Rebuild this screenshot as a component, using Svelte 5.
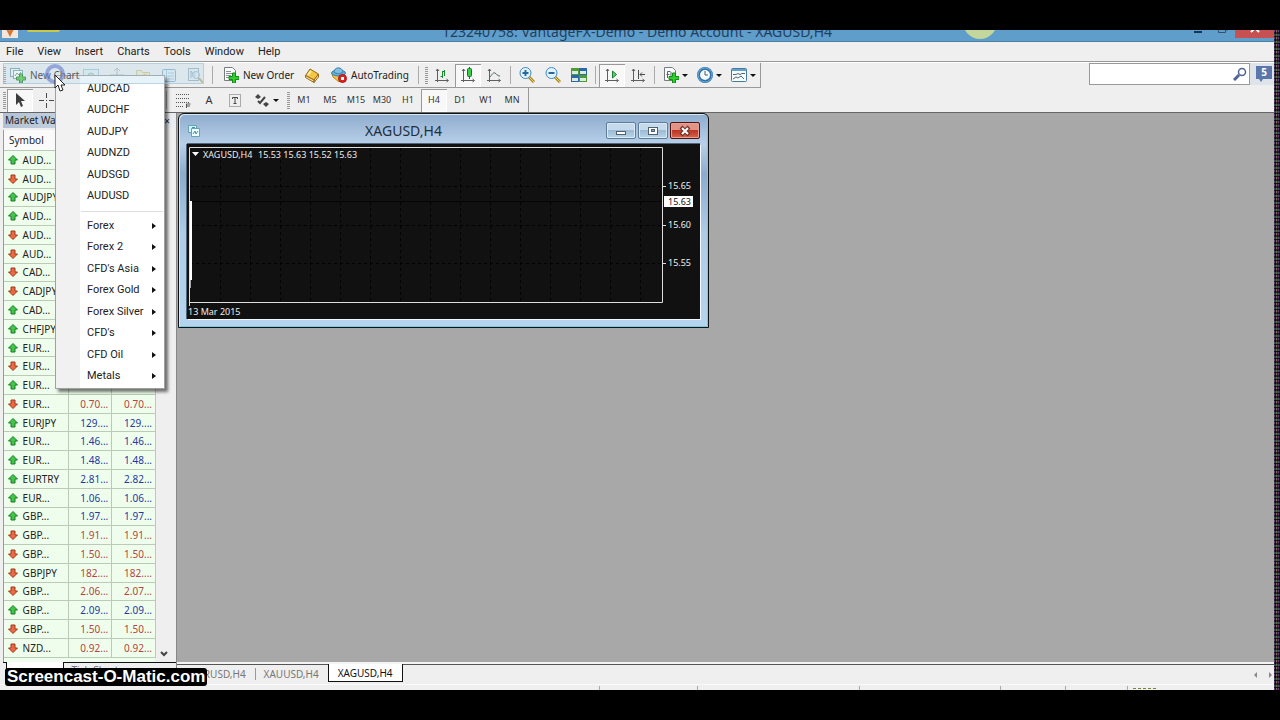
<script lang="ts">
  const menuBar = ['File', 'View', 'Insert', 'Charts', 'Tools', 'Window', 'Help'];
  const timeframes = ['M1', 'M5', 'M15', 'M30', 'H1', 'H4', 'D1', 'W1', 'MN'];
  const pairs = ['AUDCAD', 'AUDCHF', 'AUDJPY', 'AUDNZD', 'AUDSGD', 'AUDUSD'];
  const groups = ['Forex', 'Forex 2', "CFD's Asia", 'Forex Gold', 'Forex Silver', "CFD's", 'CFD Oil', 'Metals'];

  const quotes = [
    { symbol: 'AUD...', up: true, bid: '0.97...', ask: '0.97...' },
    { symbol: 'AUD...', up: false, bid: '0.76...', ask: '0.76...' },
    { symbol: 'AUDJPY', up: true, bid: '92.7...', ask: '92.7...' },
    { symbol: 'AUD...', up: true, bid: '1.04...', ask: '1.04...' },
    { symbol: 'AUD...', up: false, bid: '1.06...', ask: '1.06...' },
    { symbol: 'AUD...', up: false, bid: '0.76...', ask: '0.76...' },
    { symbol: 'CAD...', up: false, bid: '0.78...', ask: '0.78...' },
    { symbol: 'CADJPY', up: false, bid: '95.0...', ask: '95.0...' },
    { symbol: 'CAD...', up: true, bid: '1.08...', ask: '1.08...' },
    { symbol: 'CHFJPY', up: true, bid: '120....', ask: '120....' },
    { symbol: 'EUR...', up: true, bid: '1.37...', ask: '1.37...' },
    { symbol: 'EUR...', up: false, bid: '1.34...', ask: '1.34...' },
    { symbol: 'EUR...', up: true, bid: '1.05...', ask: '1.05...' },
    { symbol: 'EUR...', up: false, bid: '0.70...', ask: '0.70...' },
    { symbol: 'EURJPY', up: true, bid: '129....', ask: '129....' },
    { symbol: 'EUR...', up: true, bid: '1.46...', ask: '1.46...' },
    { symbol: 'EUR...', up: true, bid: '1.48...', ask: '1.48...' },
    { symbol: 'EURTRY', up: true, bid: '2.81...', ask: '2.82...' },
    { symbol: 'EUR...', up: true, bid: '1.06...', ask: '1.06...' },
    { symbol: 'GBP...', up: true, bid: '1.97...', ask: '1.97...' },
    { symbol: 'GBP...', up: false, bid: '1.91...', ask: '1.91...' },
    { symbol: 'GBP...', up: false, bid: '1.50...', ask: '1.50...' },
    { symbol: 'GBPJPY', up: false, bid: '182....', ask: '182....' },
    { symbol: 'GBP...', up: false, bid: '2.06...', ask: '2.07...' },
    { symbol: 'GBP...', up: true, bid: '2.09...', ask: '2.09...' },
    { symbol: 'GBP...', up: false, bid: '1.50...', ask: '1.50...' },
    { symbol: 'NZD...', up: false, bid: '0.92...', ask: '0.92...' },
  ];

  const chartTabs = ['EURUSD,H4', 'XAUUSD,H4', 'XAGUSD,H4'];
  const gridX = Array.from({ length: 15 }, (_, i) => 33 + i * 30);
  const priceLevels = [
    { y: 42, label: '15.65' },
    { y: 81, label: '15.60' },
    { y: 119, label: '15.55' },
  ];

  let timeframe = $state('H4');
  let activeTab = $state('XAGUSD,H4');
  let search = $state('');
</script>

{#snippet icon(name: string)}
  <svg class="icon" width="16" height="16" viewBox="0 0 16 16" fill="none" aria-hidden="true">
    {#if name === 'newchart'}
      <rect x="0.5" y="1.5" width="9" height="8" fill="#e4f0f6" stroke="#6a9aac" />
      <rect x="3.5" y="3.5" width="9" height="8" fill="#f2fafa" stroke="#6a9aac" />
      <path d="M5 9l2-3 2 2 2-3" stroke="#4a9a5a" />
      <path d="M9.500 7h3v3h3v3h-3v3h-3v-3h-3v-3h3z" fill="#45c440" stroke="#1f7a2a" />
    {:else if name === 'profiles'}
      <rect x="0.500" y="2.500" width="15" height="11" fill="#dff0f4" stroke="#7fb4c4" />
      <circle cx="8" cy="9" r="3" fill="#a8dcae" stroke="#68a87c" />
    {:else if name === 'watch'}
      <path d="M8 1v14M1 8h14M5 4l3-3 3 3M5 12l3 3 3-3" stroke="#8a9aa4" />
    {:else if name === 'folder'}
      <path d="M1.500 13.500v-10h5l1 2h7v8z" fill="#f3e7b6" stroke="#c4ac5a" />
      <path d="M8 8l2-2 2 2-2 3z" fill="#e4b84a" />
    {:else if name === 'terminal'}
      <rect x="1.500" y="2.500" width="13" height="12" rx="1" fill="#e0eef8" stroke="#4a86b4" />
      <path d="M5.500 3v11M7 6h6M7 9h6M7 12h6" stroke="#86aecb" />
    {:else if name === 'tester'}
      <rect x="1.500" y="1.500" width="10" height="12" fill="#e6eff4" stroke="#6f889a" />
      <path d="M4 11V4l4 6V4" stroke="#6a8094" />
      <circle cx="9" cy="8" r="3.500" stroke="#7a9ab0" fill="#dfeff680" />
      <path d="M12 11l4 5" stroke="#a28c1c" stroke-width="2" />
    {:else if name === 'order' || name === 'indicator'}
      <path d="M1.500 0.500h8l3 3v10h-11z" fill="#fbfbfb" stroke="#747c80" />
      {#if name === 'order'}
        <path d="M3 4.500h5M3 6.500h7M3 8.500h5M3 10.500h4" stroke="#879196" />
      {:else}
        <path d="M4.500 11V4.500h3M3.500 7.500h3M8 5v4" stroke="#58656a" />
      {/if}
      <path d="M9.500 6h3v3.500H16v3h-3.500V16h-3v-3.500H6v-3h3.500z" fill="#30cf2c" stroke="#148a1b" />
    {:else if name === 'book'}
      <path d="M1.500 8.500l4.500-6.500 8.500 5-4.500 6z" fill="#f2c744" stroke="#98691a" />
      <path d="M1.500 8.500v2l8.500 5v-2.500zM10 13v2.500l4.500-5.500V7z" fill="#fbe298" stroke="#98691a" />
      <path d="M4 8l3-4" stroke="#fff0b0" stroke-width="2" />
    {:else if name === 'auto'}
      <path d="M1 7l13-1-1 4-5 5-6-5z" fill="#f3c63e" stroke="#b7871e" />
      <ellipse cx="7.500" cy="6" rx="7" ry="3" fill="#68acd6" stroke="#3c81ad" />
      <path d="M3 5c0-5 8-6 9 0-2 2-7 2-9 0z" fill="#80bfe3" stroke="#3c81ad" />
      <circle cx="11.500" cy="11.500" r="4" fill="#db2323" stroke="#a51818" />
      <rect x="10" y="10" width="3" height="3" fill="#fff" />
    {:else if name === 'bars' || name === 'candles' || name === 'line' || name === 'scroll' || name === 'shift'}
      <path d="M3.500 2v13M1 13.500h13M2 4l1.500-2L5 4M12.500 12l2 1.500-2 1.500" stroke="#5b5f62" />
      {#if name === 'bars'}
        <path d="M8.500 4v7M6.500 9.500h2M8.500 4.500h2M10.500 3v6" stroke="#188b2d" />
      {:else if name === 'candles'}
        <path d="M9.500 0v12" stroke="#0a7b24" />
        <rect x="7.500" y="1.500" width="4" height="8" rx="1" fill="#3ccc48" stroke="#0a7b24" />
      {:else if name === 'line'}
        <path d="M4 10c2-2 3-5 5-4s2 3 5 3" stroke="#4e6757" />
      {:else if name === 'scroll'}
        <path d="M8.500 4v7l4-3.500z" fill="#62cf72" stroke="#168332" />
      {:else}
        <path d="M8.500 3v9M10 7.500h5M12 5.500l-2 2 2 2" stroke="#484d50" />
      {/if}
    {:else if name === 'zoomin' || name === 'zoomout'}
      <path d="M10 10l5 5" stroke="#a98824" stroke-width="3" />
      <path d="M10 10l5 5" stroke="#f1d358" />
      <circle cx="6.500" cy="6" r="5.500" fill="#e2f3fb" stroke="#3e8ac0" />
      <path d="M3.500 6h6" stroke="#276b9e" stroke-width="2" />
      {#if name === 'zoomin'}<path d="M6.500 3v6" stroke="#276b9e" stroke-width="2" />{/if}
    {:else if name === 'tiles'}
      <path d="M0 1h8v7H0zM8 8h8v7H8z" fill="#4f9b34" />
      <path d="M8 1h8v7H8zM0 8h8v7H0z" fill="#2e66ab" />
      <path d="M1 4h6v3H1zM9 4h6v3H9zM1 11h6v3H1zM9 11h6v3H9z" fill="#d9ecdf" />
    {:else if name === 'clock'}
      <circle cx="8" cy="8" r="6.500" fill="#f5fafc" stroke="#2f72ac" stroke-width="3" />
      <circle cx="8" cy="8" r="7" stroke="#72acd4" />
      <path d="M8 4v4h3" stroke="#4d5a62" />
    {:else if name === 'template'}
      <rect x="0.500" y="1.500" width="15" height="13" rx="1" fill="#f6fafb" stroke="#467a9b" />
      <path d="M1 3h14" stroke="#62a1c9" stroke-width="2" />
      <path d="M2 7.500h3l2-1 2 1 2-1h3M2 12l3-2 2 1 3-2 3 3" stroke="#4c6974" />
    {:else if name === 'cursor'}
      <path d="M4 1v12l3-3 2 5 2-1-2-5h4z" fill="#3c3c3c" />
    {:else if name === 'cross'}
      <path d="M8.500 1v5M8.500 11v5M1 8.500h5M11 8.500h5M8 8.500h1" stroke="#484848" />
    {:else if name === 'fib'}
      <path d="M1 2.500h13M1 6.500h13M1 10.500h13M1 14.500h8" stroke="#555" stroke-dasharray="1 1" />
      <path d="M11.500 16v-4h4M12 14h3" stroke="#555" />
    {:else if name === 'label'}
      <rect x="2.500" y="2.500" width="11" height="12" stroke="#666" stroke-dasharray="1 1" />
      <path d="M5.500 7V5.500h5V7M8 5v7M6.500 11.500h3" stroke="#444" />
    {:else if name === 'shapes'}
      <path d="M1 5l3-3 3 3-3 2zM9 12l3-2 3 2-3 3z" fill="#444" />
      <path d="M4 9l2 2 5-6" stroke="#444" stroke-width="2" />
    {:else if name === 'slope'}
      <path d="M2 14L14 2" stroke="#555" />
    {/if}
  </svg>
{/snippet}

{#snippet tool(name: string, title: string, pressed = false)}
  <button type="button" class="tool" class:pressed aria-label={title}>{@render icon(name)}</button>
{/snippet}

<div class="screen">
  <div class="app">
    <header class="titlebar">
      <svg class="logo" width="16" height="16" viewBox="0 0 16 16" aria-hidden="true">
        <rect width="16" height="16" fill="#f4e6dc" />
        <path d="M2 3l6 12 6-12-4 2-2 4-2-4z" fill="#d8752f" />
      </svg>
      <span class="smear"></span>
      <h1>123240758: VantageFX-Demo - Demo Account - XAGUSD,H4</h1>
      <span class="orb"></span>
      <div class="window-controls">
        <button type="button" aria-label="Minimize">
          <svg width="10" height="10" viewBox="0 0 10 10"><path d="M1 7h8v2H1z" fill="#173653" /></svg>
        </button>
        <button type="button" aria-label="Restore">
          <svg width="12" height="12" viewBox="0 0 12 12" fill="none" stroke="#31536e"><path d="M1.500 3.500h7v7h-7zM4 1.500h6.500V8H9" /></svg>
        </button>
        <button type="button" class="close" aria-label="Close">
          <svg width="12" height="12" viewBox="0 0 12 12" stroke="#fff" stroke-width="2"><path d="M2 2l8 8M10 2l-8 8" /></svg>
        </button>
      </div>
    </header>

    <nav class="menubar">
      {#each menuBar as item}
        <button type="button">{item}</button>
      {/each}
    </nav>

    <div class="toolbars">
      <div class="toolbar-rows">
        <div class="toolbar standard">
          <span class="grip"></span>
          <button type="button" class="tool wide ghost">{@render icon('newchart')}<span>New Chart</span></button>
          <div class="faded">
            {@render tool('profiles', 'Profiles')}
            {@render tool('watch', 'Market Watch')}
            {@render tool('folder', 'Navigator')}
            {@render tool('terminal', 'Terminal')}
            {@render tool('tester', 'Strategy Tester')}
          </div>
          <span class="divider"></span>
          <button type="button" class="tool wide order">{@render icon('order')}<span>New Order</span></button>
          {@render tool('book', 'MetaEditor')}
          <button type="button" class="tool wide auto">{@render icon('auto')}<span>AutoTrading</span></button>
          <span class="divider narrow"></span>
          <span class="grip"></span>
          {@render tool('bars', 'Bar Chart')}
          {@render tool('candles', 'Candlesticks', true)}
          {@render tool('line', 'Line Chart')}
          <span class="divider narrow"></span>
          {@render tool('zoomin', 'Zoom In')}
          {@render tool('zoomout', 'Zoom Out')}
          {@render tool('tiles', 'Tile Windows')}
          <span class="divider narrow"></span>
          {@render tool('scroll', 'Auto Scroll', true)}
          {@render tool('shift', 'Chart Shift')}
          <span class="divider narrow"></span>
          {#each ['indicator', 'clock', 'template'] as name}
            <button type="button" class="tool drop" aria-label={name}>{@render icon(name)}<i class="caret"></i></button>
          {/each}
        </div>

        <div class="toolbar drawing">
          <span class="grip"></span>
          {@render tool('cursor', 'Cursor', true)}
          {@render tool('cross', 'Crosshair')}
          {#each ['Vertical Line', 'Horizontal Line', 'Trendline', 'Channel'] as title}
            {@render tool('slope', title)}
          {/each}
          <span class="divider narrow"></span>
          {@render tool('fib', 'Fibonacci')}
          <button type="button" class="tool letter">A</button>
          {@render tool('label', 'Text Label')}
          <button type="button" class="tool drop" aria-label="Arrows">{@render icon('shapes')}<i class="caret"></i></button>
          <span class="grip"></span>
          {#each timeframes as tf}
            <button type="button" class="tool tf" class:pressed={timeframe === tf} onclick={() => (timeframe = tf)}>{tf}</button>
          {/each}
        </div>
      </div>

      <div class="search">
        <input type="text" aria-label="Search" bind:value={search} />
        <svg width="14" height="14" viewBox="0 0 14 14" fill="none" aria-hidden="true">
          <circle cx="9" cy="5" r="3.500" stroke="#4c6596" stroke-width="1.500" />
          <path d="M6 8l-5 5" stroke="#4c6596" stroke-width="3" />
        </svg>
      </div>
      <button type="button" class="chat" aria-label="Messages"><span>5</span></button>
    </div>

    <div class="body">
      <aside class="market">
        <div class="market-title">
          <h2>Market Watch</h2>
          <button type="button" aria-label="Close panel">×</button>
        </div>
        <div class="market-list">
          <table>
            <thead>
              <tr><th>Symbol</th><th>Bid</th><th>Ask</th></tr>
            </thead>
            <tbody>
              {#each quotes as q}
                <tr class:up={q.up}>
                  <td>
                    <svg width="10" height="10" viewBox="0 0 10 10" aria-hidden="true">
                      {#if q.up}
                        <path d="M5 0.500l4.500 4.500h-2.500v4h-4v-4h-2.500z" fill="#43c549" stroke="#187b26" />
                      {:else}
                        <path d="M5 9.500l4.500-4.500h-2.500v-4h-4v4h-2.500z" fill="#ee6843" stroke="#9a3a1d" />
                      {/if}
                    </svg>
                    {q.symbol}
                  </td>
                  <td class="price">{q.bid}</td>
                  <td class="price">{q.ask}</td>
                </tr>
              {/each}
            </tbody>
          </table>
          <div class="scrollbar">
            <svg width="8" height="6" viewBox="0 0 8 6" fill="none" stroke="#444" stroke-width="2" aria-hidden="true"><path d="M1 1l3 3 3-3" /></svg>
          </div>
        </div>
        <div class="market-tabs">
          <button type="button" class="active">Symbols</button>
          <button type="button">Tick Chart</button>
        </div>
      </aside>

      <main class="desk">
        <div class="mdi">
          <section class="chart-window">
            <div class="chart-title">
              <svg width="14" height="14" viewBox="0 0 14 14" aria-hidden="true">
                <path d="M1.500 1.500h8v7h-8z" fill="#d5f1f1" stroke="#65a3b7" />
                <path d="M4.500 4.500h8v8h-8z" fill="#edffff" stroke="#65a3b7" />
                <path d="M5 3.500h3M6 10l2-3 1 3 2-3" fill="none" stroke="#4c91a6" />
              </svg>
              <h3>XAGUSD,H4</h3>
              <div class="chart-controls">
                <button type="button" aria-label="Minimize chart">
                  <svg width="14" height="12" viewBox="0 0 14 12"><rect x="2.500" y="6.500" width="9" height="3" fill="#fff" stroke="#53616d" /></svg>
                </button>
                <button type="button" aria-label="Maximize chart">
                  <svg width="14" height="12" viewBox="0 0 14 12"><rect x="2.500" y="2.500" width="9" height="7" fill="#fff" stroke="#53616d" /><rect x="5.500" y="4.500" width="3" height="2" fill="#8aa6bc" stroke="#53616d" /></svg>
                </button>
                <button type="button" class="close" aria-label="Close chart">
                  <svg width="14" height="12" viewBox="0 0 14 12"><path d="M3 2l8 8M11 2l-8 8" stroke="#6d332d" stroke-width="4" /><path d="M4 3l6 6M10 3l-6 6" stroke="#fff" stroke-width="2" /></svg>
                </button>
              </div>
            </div>
            <svg class="plot" viewBox="0 0 513 175" role="img" aria-label="XAGUSD, H4 price chart">
              <rect width="513" height="175" fill="#111" />
              <g stroke="#020202" stroke-dasharray="3 3">
                {#each gridX as x}
                  <path d="M{x}.5 4V158" />
                {/each}
                {#each priceLevels as level}
                  <path d="M3 {level.y}.5H475" />
                {/each}
              </g>
              <path d="M3 57.500H475" stroke="#060606" />
              <path d="M2.500 162V3.500H475.500V158.500H2" fill="none" stroke="#dedede" />
              <path d="M3 57h2v79H3z" fill="#fff" />
              <path d="M3.500 136v8" stroke="#aaa" />
              <path d="M5 8h7l-3.500 4z" fill="#fff" />
              <text x="16" y="14">XAGUSD,H4</text>
              <text x="71" y="14">15.53 15.63 15.52 15.63</text>
              {#each priceLevels as level}
                <path d="M476 {level.y}.5h3" stroke="#dedede" />
                <text x="481" y={level.y + 3}>{level.label}</text>
              {/each}
              <rect x="477" y="52" width="29" height="11" fill="#fff" />
              <text class="current" x="481" y="61">15.63</text>
              <text x="1" y="171">13 Mar 2015</text>
            </svg>
          </section>
        </div>
        <div class="chart-tabs">
          {#each chartTabs as tab}
            <button type="button" class:active={activeTab === tab} onclick={() => (activeTab = tab)}>{tab}</button>
          {/each}
          <div class="tab-arrows">
            <button type="button" class="prev" aria-label="Previous tabs"></button>
            <button type="button" class="next" aria-label="Next tabs"></button>
          </div>
        </div>
      </main>
    </div>

    <footer class="status">
      <span></span><span></span><span></span><span></span><span></span><span></span><i></i>
    </footer>

    <div class="popup" role="menu">
      {#each pairs as pair}
        <button type="button" role="menuitem">{pair}</button>
      {/each}
      <hr />
      {#each groups as group}
        <button type="button" role="menuitem" class="sub">{group}</button>
      {/each}
    </div>
    <div class="highlight"></div>
    <span class="click-ring"></span>
    <svg class="pointer" width="12" height="18" viewBox="0 0 12 18" aria-hidden="true">
      <path d="M1 1v13l3-3 2 6 3-1-2-5h4z" fill="#fff" stroke="#222" />
    </svg>
    <div class="watermark">Screencast-O-Matic.com</div>
  </div>
  <div class="noise"></div>
</div>

<style>
  :global(body) {
    background: #000;
  }

  .screen {
    display: flex;
    height: 100vh;
    box-sizing: border-box;
    padding: 30px 0;
    background: #000;
    color: #222;
    font: 10px/14px 'Noto Sans', 'Open Sans', sans-serif;
  }

  .app {
    position: relative;
    flex: 1;
    min-width: 0;
    display: flex;
    flex-direction: column;
    background: #efefef;
  }

  .noise {
    width: 6px;
    background:
      repeating-linear-gradient(0deg, #0000 0 2px, #000b 2px 3px, #2e694080 3px 5px, #0008 5px 7px),
      repeating-linear-gradient(90deg, #5d407a 0 1px, #15151b 1px 2px, #826a52 2px 3px, #222a45 3px 4px);
  }

  h1,
  h2,
  h3 {
    margin: 0;
    font-size: 10px;
    font-weight: 400;
  }

  button {
    padding: 0;
    border: 0;
    background: none;
    color: inherit;
    font: inherit;
    white-space: nowrap;
  }

  svg {
    display: block;
    flex-shrink: 0;
  }

  .titlebar {
    position: relative;
    display: flex;
    align-items: flex-end;
    justify-content: center;
    height: 12px;
    overflow: hidden;
    background: #5f9dcb;
    border-bottom: 1px solid #4c7fa6;
    box-sizing: border-box;
  }

  .titlebar h1 {
    color: #1f415e;
    font-size: 14px;
    line-height: 18px;
  }

  .logo {
    position: absolute;
    left: 2px;
    bottom: 3px;
  }

  .smear {
    position: absolute;
    left: 27px;
    top: -2px;
    width: 33px;
    height: 4px;
    border-radius: 2px;
    background: #c8c84a;
  }

  .orb {
    position: absolute;
    left: 963px;
    bottom: 2px;
    width: 34px;
    height: 34px;
    border-radius: 50%;
    background: #c3d69b;
  }

  .window-controls {
    position: absolute;
    right: 0;
    bottom: 3px;
    display: flex;
  }

  .window-controls button {
    display: flex;
    align-items: flex-end;
    justify-content: center;
    width: 25px;
    height: 16px;
  }

  .window-controls svg {
    margin-bottom: 4px;
  }

  .window-controls .close {
    width: 39px;
    background: #c75050;
  }

  .menubar {
    display: flex;
    height: 20px;
    box-sizing: border-box;
    gap: 14px;
    padding-left: 6px;
    border-bottom: 1px solid #999;
    font: 11px/18px Roboto, sans-serif;
  }

  .toolbars {
    display: flex;
    align-items: flex-start;
    border-top: 1px solid #fff;
    border-bottom: 1px solid #666;
  }

  .toolbar-rows {
    flex: 1;
  }

  .toolbar {
    display: flex;
    align-items: center;
    width: max-content;
    height: 24px;
    box-sizing: border-box;
    border-right: 1px solid #999;
  }

  .standard {
    height: 25px;
    border-bottom: 1px solid #999;
  }

  .drawing {
    padding-right: 3px;
  }

  .faded {
    display: flex;
    opacity: 0.6;
  }

  .grip {
    width: 3px;
    height: 18px;
    margin: 0 1px 0 3px;
    background: repeating-linear-gradient(0deg, #999 0 1px, #efefef 1px 2px);
  }

  .divider {
    width: 1px;
    height: 18px;
    margin: 0 4px;
    background: #aaa;
  }

  .divider.narrow {
    margin: 0 3px;
  }

  .tool {
    display: flex;
    align-items: center;
    justify-content: center;
    width: 26px;
    height: 23px;
  }

  .tool.wide {
    width: 82px;
    justify-content: flex-start;
    gap: 4px;
    padding-left: 6px;
    box-sizing: border-box;
  }

  .tool.ghost {
    position: relative;
    z-index: 1;
    width: 71px;
    padding-left: 3px;
    opacity: 0.7;
  }

  .tool.auto {
    width: 90px;
  }

  .tool.drop {
    width: 34px;
    gap: 3px;
  }

  .drawing .tool.drop {
    width: 36px;
  }

  .pressed {
    background: #f8f8f8;
    box-shadow: inset 1px 1px #999, inset -1px -1px #fff;
  }

  .letter {
    font-size: 11px;
    color: #333;
  }

  .tf {
    font-size: 9px;
    color: #333;
  }

  .caret {
    border: 3px solid transparent;
    border-top-color: #111;
    border-bottom: 0;
  }

  .search {
    display: flex;
    align-items: center;
    width: 161px;
    height: 22px;
    box-sizing: border-box;
    padding-right: 2px;
    border: 1px solid #999;
    background: #fff;
  }

  .search input {
    flex: 1;
    min-width: 0;
    border: 0;
    outline: 0;
    background: none;
    font: inherit;
  }

  .chat {
    width: 24px;
    height: 22px;
    padding-left: 6px;
    background: #dfe4eb;
  }

  .chat span {
    display: block;
    width: 16px;
    height: 13px;
    background: #5b76aa;
    color: #fff;
    font-weight: 700;
    line-height: 13px;
  }

  .chat::after {
    content: '';
    display: block;
    width: 0;
    margin-left: 3px;
    border: 2px solid transparent;
    border-top: 3px solid #5b76aa;
    border-bottom: 0;
  }

  .body {
    display: flex;
    flex: 1;
    min-height: 0;
  }

  .market {
    display: flex;
    flex-direction: column;
    width: 173px;
    padding-left: 3px;
    border-right: 1px solid #888;
  }

  .market-title {
    display: flex;
    justify-content: space-between;
    height: 15px;
    padding: 0 6px 0 2px;
    background: linear-gradient(90deg, #b0c1d5, #e9ecf0 90%);
  }

  .market-list {
    display: flex;
    flex: 1;
    min-height: 0;
    margin-top: 2px;
    border-left: 1px solid #999;
    background: linear-gradient(90deg, #effeec 151px, #efefef 151px);
  }

  table {
    width: 152px;
    height: calc(100% - 4px);
    table-layout: fixed;
    border-collapse: collapse;
    line-height: 12px;
  }

  th {
    height: 20px;
    padding: 0 5px;
    background: #fafafa;
    font-weight: 400;
    text-align: left;
  }

  th:first-child {
    width: 54px;
  }

  td {
    padding: 0 4px;
    border: 1px solid #bccbb8;
    border-left: 0;
    background: #effeec;
    white-space: nowrap;
  }

  td svg {
    display: inline-block;
    margin-right: 2px;
    vertical-align: -1px;
  }

  .price {
    padding: 0 3px;
    color: #b5433e;
    text-align: right;
  }

  .up .price {
    color: #2338a4;
  }

  .scrollbar {
    display: flex;
    align-items: flex-end;
    justify-content: center;
    width: 15px;
    padding-bottom: 5px;
  }

  .market-tabs {
    display: flex;
    align-items: flex-start;
    height: 22px;
    box-sizing: border-box;
    border-top: 1px solid #111;
    color: #777;
  }

  .market-tabs button {
    padding: 0 8px;
  }

  .market-tabs .active {
    height: 20px;
    margin: -1px 0 0 3px;
    border: 1px solid #111;
    border-top: 0;
    background: #fff;
    color: #111;
  }

  .desk {
    display: flex;
    flex: 1;
    flex-direction: column;
    min-width: 0;
  }

  .mdi {
    position: relative;
    flex: 1;
    background: #a8a8a8;
  }

  .chart-window {
    position: absolute;
    left: 1px;
    top: 0;
    width: 513px;
    padding: 0 8px;
    border: 1px solid #111;
    border-radius: 6px 6px 0 0;
    background: linear-gradient(#8facce, #b8d0e9 30px, #8caccd 60px, #aecce8 120px, #b5d4ee);
    box-shadow: inset 1px 1px #d8e7f4, inset -1px -1px #70cbe4;
  }

  .chart-title {
    display: flex;
    align-items: center;
    height: 27px;
    padding-top: 3px;
  }

  .chart-title h3 {
    flex: 1;
    color: #1d3040;
    font-size: 14px;
    line-height: 20px;
    text-align: center;
  }

  .chart-controls {
    display: flex;
    gap: 2px;
  }

  .chart-controls button {
    display: flex;
    align-items: center;
    justify-content: center;
    width: 30px;
    height: 17px;
    box-sizing: border-box;
    border: 1px solid #5e7d99;
    border-radius: 2px;
    background: linear-gradient(#c5dbed 45%, #9dbad4 50%, #b9d6ec);
    box-shadow: inset 0 0 0 1px #d9eaf6;
  }

  .chart-controls .close {
    border-color: #4f1510;
    background: linear-gradient(#e39386 45%, #bd3524 50%, #d9644b);
    box-shadow: inset 0 0 0 1px #e4a196;
  }

  .plot {
    width: 100%;
    margin-bottom: 8px;
    box-shadow: 1px 1px #f3f8fc, 0 -1px #526579, -1px 0 #526579;
  }

  .plot text {
    fill: #eee;
    font-size: 9px;
  }

  .plot .current {
    fill: #111;
  }

  .chart-tabs {
    display: flex;
    height: 19px;
    border-top: 1px solid #555;
    box-shadow: 0 -2px #f4f4f4;
    margin-top: 2px;
    color: #777;
  }

  .chart-tabs button {
    height: 17px;
    padding: 0 9px;
  }

  .chart-tabs button:first-child {
    padding-left: 14px;
  }

  .chart-tabs .active {
    height: 18px;
    margin-top: -1px;
    border: 1px solid #111;
    border-top: 0;
    background: #fff;
    color: #111;
  }

  .chart-tabs button:nth-child(2) {
    background: linear-gradient(#999, #999) 0 50% / 1px 12px no-repeat;
  }

  .tab-arrows {
    display: flex;
    align-items: center;
    gap: 12px;
    margin: 0 2px 0 auto;
  }

  .tab-arrows button {
    width: 0;
    height: 0;
    padding: 0;
    border: 3px solid transparent;
    background: none;
  }

  .tab-arrows button.prev {
    padding: 0;
    border-right-color: #888;
    border-left: 0;
  }

  .tab-arrows button.next {
    border-left-color: #888;
    border-right: 0;
  }

  .status {
    display: grid;
    grid-template-columns: 600px 98px 162px 141px 65px 62px 28px;
    height: 6px;
    padding-top: 1px;
    box-sizing: border-box;
    border-top: 1px solid #fafafa;
  }

  .status span {
    border-right: 1px solid #aaa;
  }

  .status i {
    height: 1px;
    margin: 2px 0 0 5px;
    border-top: 1px dashed #7b8230;
  }

  .popup {
    position: absolute;
    left: 55px;
    top: 45px;
    display: grid;
    grid-template-rows: repeat(6, 1fr) 8px repeat(8, 1fr);
    width: 110px;
    height: 314px;
    box-sizing: border-box;
    padding: 2px 1px 1px;
    border: 1px solid #a0a0a0;
    background: linear-gradient(90deg, #f1f1f1 24px, #fff 24px);
    box-shadow: 3px 3px 3px #0008;
    font: 11px/20px Roboto, sans-serif;
  }

  .popup button {
    display: flex;
    align-items: center;
    justify-content: space-between;
    padding: 0 7px 0 30px;
  }

  .popup .sub::after {
    content: '';
    border: 3px solid transparent;
    border-left: 4px solid #111;
    border-right: 0;
  }

  .popup hr {
    align-self: center;
    width: 82px;
    margin: 0 0 0 auto;
    border: 0;
    border-top: 1px solid #ddd;
  }

  .highlight {
    position: absolute;
    left: 3px;
    top: 33px;
    width: 199px;
    height: 19px;
    border: 1px solid #8eb8d080;
    background: #a9d5e848;
    pointer-events: none;
  }

  .click-ring {
    position: absolute;
    z-index: 2;
    left: 45px;
    top: 34px;
    width: 12px;
    height: 12px;
    border: 4px solid #6c7fd0a0;
    border-radius: 50%;
    pointer-events: none;
  }

  .pointer {
    position: absolute;
    z-index: 2;
    left: 54px;
    top: 44px;
    pointer-events: none;
  }

  .watermark {
    position: absolute;
    left: 5px;
    bottom: 4px;
    padding: 0 2px;
    border-radius: 3px;
    background: #000;
    color: #fff;
    font: 700 17px/18px 'Liberation Sans', sans-serif;
  }
</style>
